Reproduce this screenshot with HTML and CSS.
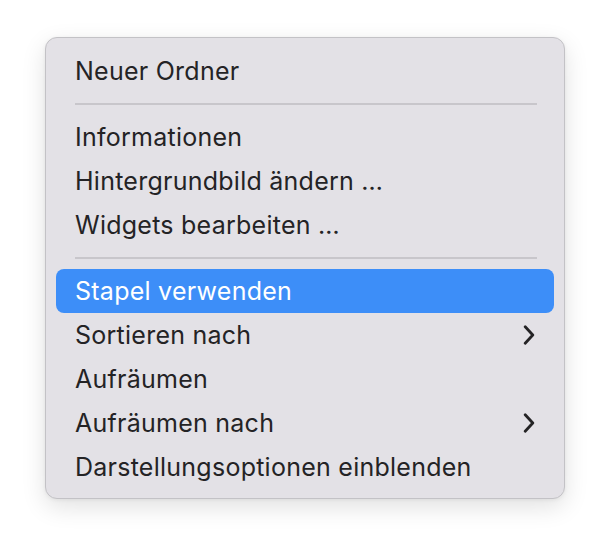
FILE: index.html
```html
<!DOCTYPE html>
<html lang="de">
<head>
<meta charset="utf-8">
<link rel="stylesheet" href="styles.css">
</head>
<body>
<div class="menu">
  <div class="item">Neuer Ordner</div>
  <div class="sep"></div>
  <div class="item">Informationen</div>
  <div class="item">Hintergrundbild ändern …</div>
  <div class="item">Widgets bearbeiten …</div>
  <div class="sep"></div>
  <div class="item active">Stapel verwenden</div>
  <div class="item">Sortieren nach<svg class="chev" viewBox="0 0 12 20" width="12" height="20"><path d="M2.2 1.8 L9.8 10 L2.2 18.2" fill="none" stroke="currentColor" stroke-width="2.8" stroke-linecap="round" stroke-linejoin="round"/></svg></div>
  <div class="item">Aufräumen</div>
  <div class="item">Aufräumen nach<svg class="chev" viewBox="0 0 12 20" width="12" height="20"><path d="M2.2 1.8 L9.8 10 L2.2 18.2" fill="none" stroke="currentColor" stroke-width="2.8" stroke-linecap="round" stroke-linejoin="round"/></svg></div>
  <div class="item">Darstellungsoptionen einblenden</div>
</div>
</body>
</html>
```
FILE: styles.css
```css
html, body {
  margin: 0;
  padding: 0;
  background: #ffffff;
}
body {
  width: 610px;
  height: 552px;
  padding: 37px 0 0 45px;
  box-sizing: border-box;
  font-family: Inter, "Noto Sans", sans-serif;
}
.menu {
  width: 520px;
  box-sizing: border-box;
  background: #e3e1e6;
  border: 1px solid #c3c2c6;
  border-radius: 12px;
  padding: 11px 10px 9px;
  box-shadow: 0 8px 24px rgba(0,0,0,0.12), 0 1px 4px rgba(0,0,0,0.06);
}
.item {
  height: 44px;
  display: flex;
  align-items: center;
  justify-content: space-between;
  padding: 0 19px 0 19px;
  border-radius: 8px;
  font-size: 25px;
  letter-spacing: 0.25px;
  color: #242325;
}
.item.active {
  background: #3d8ef8;
  color: #ffffff;
}
.chev {
  color: #242325;
}
.sep {
  height: 22px;
  display: flex;
  align-items: center;
  padding: 0 17px 0 19px;
}
.sep::before {
  content: "";
  display: block;
  flex: 1;
  height: 2px;
  background: #c8c6cb;
}
```
